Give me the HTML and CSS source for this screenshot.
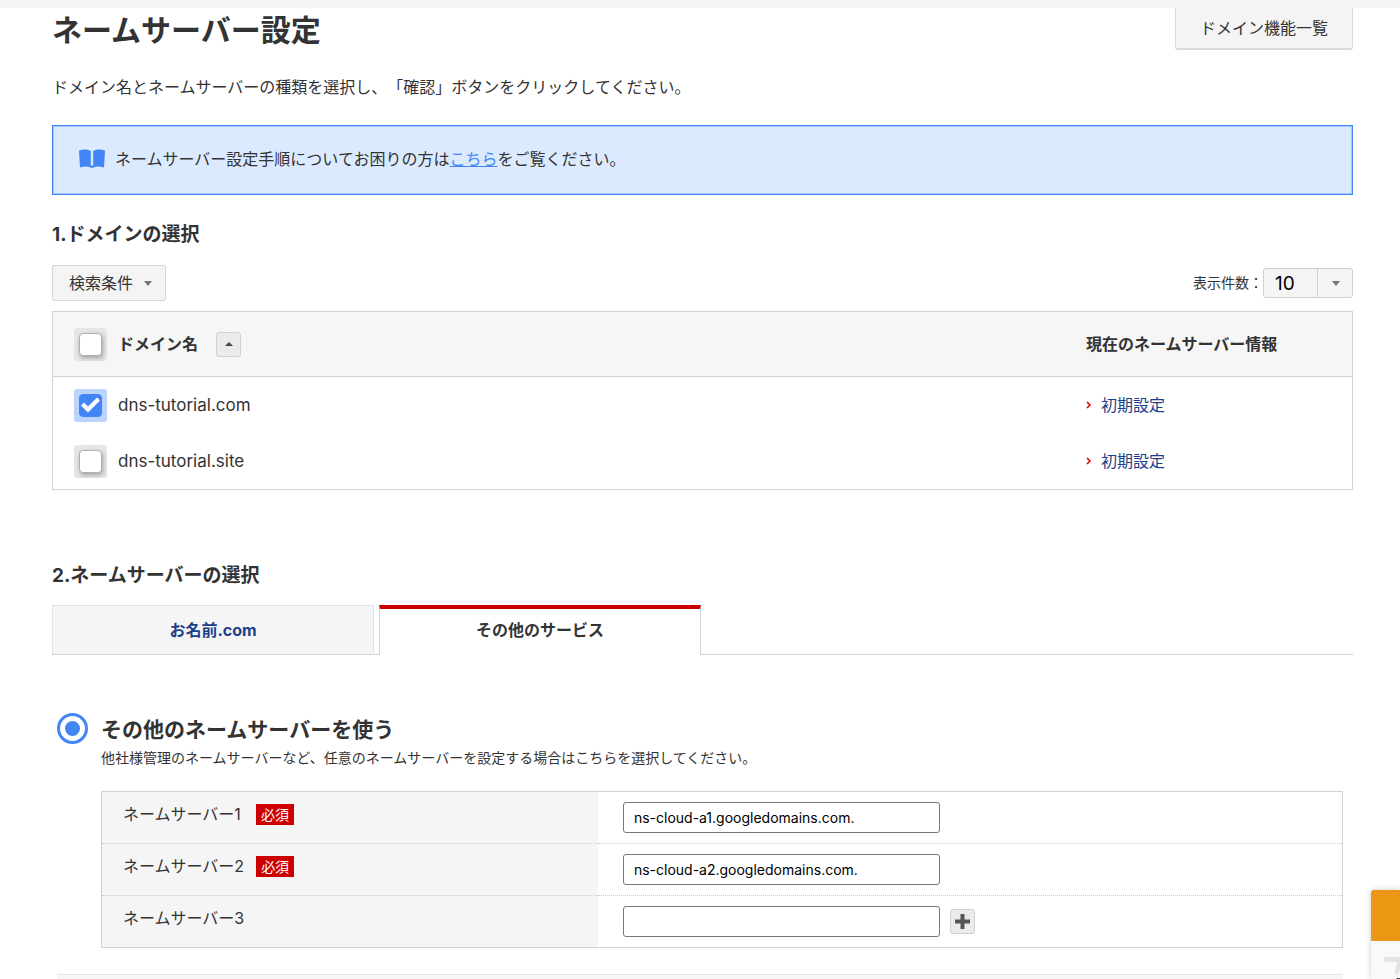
FILE: index.html
```
<!DOCTYPE html>
<html lang="ja">
<head>
  <meta charset="UTF-8">
  <meta name="viewport" content="width=device-width, initial-scale=1.0">
  <title>ネームサーバー設定</title>
  <link rel="stylesheet" href="styles.css">
</head>
<body>
  <div class="topbar"></div>

  <main class="page">
    <header class="page-header">
      <h1>ネームサーバー設定</h1>
      <button type="button" class="menu-btn">ドメイン機能一覧</button>
    </header>

    <p class="intro">ドメイン名とネームサーバーの種類を選択し、「確認」ボタンをクリックしてください。</p>

    <!-- Help notice -->
    <div class="notice">
      <svg class="book" width="26" height="20" viewBox="0 0 26 20" fill="#4285f4" aria-hidden="true">
        <path d="M0 1.500Q7-.5 11.800 2V16.500H14.200V2Q19-.5 26 1.500L25 18.500Q19 16.500 15 18.300Q13 19.800 11 18.300Q7 16.500 1 18.500Z"/>
      </svg>
      <p>ネームサーバー設定手順についてお困りの方は<a href="#">こちら</a>をご覧ください。</p>
    </div>

    <!-- Domain selection -->
    <h2>1.ドメインの選択</h2>
    <div class="toolbar">
      <button type="button" class="filter-btn">検索条件<span class="caret"></span></button>
      <div class="page-size">
        <label for="pageSize">表示件数：</label>
        <div class="select-box">
          <select id="pageSize">
            <option>10</option>
            <option>20</option>
            <option>50</option>
          </select>
          <span class="caret"></span>
        </div>
      </div>
    </div>

    <table class="domains">
      <thead>
        <tr>
          <th class="col-check"><span class="check"><input type="checkbox" aria-label="すべて選択"></span></th>
          <th class="col-name">
            <div class="sortable">ドメイン名<button type="button" class="square-btn" aria-label="並び替え"><span class="caret up"></span></button></div>
          </th>
          <th class="col-ns">現在のネームサーバー情報</th>
        </tr>
      </thead>
      <tbody>
        <tr>
          <td class="col-check"><span class="check"><input type="checkbox" id="domain1" checked></span></td>
          <td class="col-name"><label for="domain1">dns-tutorial.com</label></td>
          <td class="col-ns">
            <a href="#"><svg width="6" height="8" viewBox="0 0 6 8" aria-hidden="true"><path d="M1 1l3 3-3 3"/></svg>初期設定</a>
          </td>
        </tr>
        <tr>
          <td class="col-check"><span class="check"><input type="checkbox" id="domain2"></span></td>
          <td class="col-name"><label for="domain2">dns-tutorial.site</label></td>
          <td class="col-ns">
            <a href="#"><svg width="6" height="8" viewBox="0 0 6 8" aria-hidden="true"><path d="M1 1l3 3-3 3"/></svg>初期設定</a>
          </td>
        </tr>
      </tbody>
    </table>

    <!-- Name server selection -->
    <h2 class="second">2.ネームサーバーの選択</h2>
    <nav class="tabs">
      <a href="#" class="tab">お名前.com</a>
      <a href="#" class="tab active">その他のサービス</a>
    </nav>

    <section class="other">
      <input type="radio" id="otherNs" class="radio" checked>
      <div class="other-body">
        <label for="otherNs" class="other-title">その他のネームサーバーを使う</label>
        <p class="note">他社様管理のネームサーバーなど、任意のネームサーバーを設定する場合はこちらを選択してください。</p>

        <table class="servers">
          <tr>
            <th><label for="ns1">ネームサーバー1</label><span class="required">必須</span></th>
            <td><div class="field"><input type="text" id="ns1" value="ns-cloud-a1.googledomains.com."></div></td>
          </tr>
          <tr>
            <th><label for="ns2">ネームサーバー2</label><span class="required">必須</span></th>
            <td><div class="field"><input type="text" id="ns2" value="ns-cloud-a2.googledomains.com."></div></td>
          </tr>
          <tr>
            <th><label for="ns3">ネームサーバー3</label></th>
            <td>
              <div class="field">
                <input type="text" id="ns3">
                <button type="button" class="square-btn" aria-label="追加">
                  <svg width="15" height="15" viewBox="0 0 15 15" aria-hidden="true"><path d="M5.500 0h4v5.500H15v4H9.500V15h-4V9.500H0v-4h5.500z"/></svg>
                </button>
              </div>
            </td>
          </tr>
        </table>
      </div>
    </section>

    <div class="next-block"></div>
  </main>

  <!-- Support widget at the window edge -->
  <aside class="side-widget">
    <div class="side-head"></div>
    <div class="side-body">
      <svg width="17" height="22" viewBox="0 0 17 22" aria-hidden="true">
        <path d="M17 2.500H3M17 5L14 15" fill="none" stroke="#e4e4e4" stroke-width="5" stroke-linecap="round"/>
        <path d="M13 22L14 21H17V22Z" fill="#444"/>
      </svg>
    </div>
  </aside>
</body>
</html>
```
FILE: styles.css
```
* {
  margin: 0;
  padding: 0;
  box-sizing: border-box;
}

body {
  display: flex;
  flex-direction: column;
  min-height: 100vh;
  font-family: Inter, "Noto Sans CJK JP", sans-serif;
  font-size: 16px;
  line-height: 24px;
  text-spacing-trim: space-all;
  color: #333;
  background: #fff;
}

button, input, select {
  font-family: inherit;
  color: inherit;
}

button {
  cursor: pointer;
}

.topbar {
  height: 8px;
  background: #f4f4f4;
}

.page {
  display: flex;
  flex-direction: column;
  flex: 1;
  padding: 0 47px 0 52px;
}

/* Title row */
.page-header {
  display: flex;
  justify-content: space-between;
  align-items: flex-start;
}

h1 {
  font-size: 30px;
  line-height: 44px;
}

.menu-btn {
  padding: 8px 24px;
  font-size: 16px;
  line-height: 24px;
  background: #f4f4f4;
  border: 1px solid #d9d9d9;
  border-top: 0;
  border-bottom-width: 2px;
  border-radius: 0 0 3px 3px;
}

.intro {
  margin: 23px 0 26px;
}

/* Help notice */
.notice {
  display: flex;
  align-items: center;
  gap: 10px;
  padding: 21px 26px 23px;
  background: #dbeaff;
  border: 1px solid #4285f4;
  outline: 1px solid #a6c6fa;
  outline-offset: -2px;
}

.notice a {
  color: #4285f4;
}

h2 {
  margin-top: 26px;
  font-size: 19px;
  line-height: 28px;
}

h2.second {
  margin-top: 72px;
}

.caret {
  border: 4px solid transparent;
  border-top: 5px solid #777;
  border-bottom: 0;
}

.caret.up {
  border-top: 0;
  border-bottom: 4px solid #444;
}

/* Filter button and page size */
.toolbar {
  display: flex;
  justify-content: space-between;
  align-items: center;
  margin: 16px 0 10px;
}

.filter-btn {
  display: flex;
  align-items: center;
  gap: 11px;
  padding: 5px 13px 5px 16px;
  font-size: 16px;
  line-height: 24px;
  background: #f4f4f4;
  border: 1px solid #d5d5d5;
  border-radius: 2px;
}

.page-size {
  display: flex;
  align-items: center;
  font-size: 14px;
}

.select-box {
  display: flex;
  align-items: center;
  background: #f5f5f5;
  border: 1px solid #d0d0d0;
  border-radius: 3px;
  padding-right: 12px;
}

.select-box select {
  width: 54px;
  height: 28px;
  margin-right: 14px;
  padding-left: 11px;
  font-size: 19px;
  color: #000;
  background: none;
  border: 0;
  border-right: 1px solid #d0d0d0;
  appearance: none;
}

/* Domain table */
.domains {
  width: 100%;
  border: 1px solid #d3d3d3;
  border-collapse: separate;
  border-spacing: 0;
  text-align: left;
}

.domains thead th {
  height: 65px;
  background: #f6f6f6;
  border-bottom: 1px solid #d3d3d3;
}

.domains td {
  height: 56px;
}

.domains label {
  font-size: 17px;
}

.col-check {
  width: 65px;
  padding-left: 21px;
}

.col-ns {
  width: 266px;
}

.col-ns a {
  display: flex;
  align-items: center;
  gap: 9px;
  color: #1b3f8b;
  text-decoration: none;
}

.col-ns svg {
  fill: none;
  stroke: #d00;
  stroke-width: 1.5;
}

.sortable {
  display: flex;
  align-items: center;
  gap: 18px;
}

.square-btn {
  display: flex;
  align-items: center;
  justify-content: center;
  width: 25px;
  height: 25px;
  background: #ebebeb;
  border: 1px solid #d0d0d0;
  border-radius: 3px;
}

.square-btn svg {
  fill: #555;
}

.check {
  display: flex;
  width: 33px;
  height: 33px;
  padding: 5px;
  background: #e6e6e6;
  border-radius: 3px;
}

.check input {
  display: flex;
  justify-content: center;
  width: 23px;
  height: 23px;
  background: #fff;
  border: 1px solid #b0b0b0;
  border-radius: 4px;
  box-shadow: 1px 2px 4px rgba(0, 0, 0, 0.3);
  appearance: none;
}

.check:has(input:checked) {
  background: #bcd3fd;
}

.check input:checked {
  background: #4285f4;
  border-color: #4285f4;
  box-shadow: none;
}

.check input:checked::after {
  content: "";
  width: 21px;
  height: 21px;
  background: #fff;
  clip-path: polygon(1px 11px, 4px 8px, 8px 12px, 17px 3px, 20px 6px, 8px 18px);
}

/* Tabs */
.tabs {
  display: flex;
  gap: 5px;
  margin-top: 15px;
  border-bottom: 1px solid #d3d3d3;
}

.tab {
  flex: 0 0 322px;
  padding: 12px;
  font-weight: bold;
  line-height: 24px;
  text-align: center;
  color: #1b3f8b;
  text-decoration: none;
  background: #f5f5f5;
  border: 1px solid #e3e3e3;
  border-bottom: 0;
}

.tab.active {
  margin-bottom: -1px;
  padding-top: 9px;
  color: #333;
  background: #fff;
  border-color: #d3d3d3;
  border-top: 4px solid #c00;
}

/* Other name servers */
.other {
  display: flex;
  gap: 13px;
  margin-top: 58px;
  padding: 0 10px 0 5px;
}

.radio {
  display: flex;
  flex: none;
  width: 31px;
  height: 31px;
  padding: 5px;
  border: 3px solid #4285f4;
  border-radius: 50%;
  appearance: none;
}

.radio:checked::after {
  content: "";
  flex: 1;
  background: #4285f4;
  border-radius: 50%;
}

.other-body {
  flex: 1;
}

.other-title {
  display: block;
  font-size: 21px;
  font-weight: bold;
  line-height: 34px;
}

.note {
  margin-bottom: 22px;
  font-size: 14px;
  line-height: 22px;
}

.servers {
  width: 100%;
  border: 1px solid #d3d3d3;
  border-collapse: collapse;
}

.servers th {
  width: 40%;
  padding: 10px 21px;
  font-weight: normal;
  text-align: left;
  vertical-align: top;
  background: #f5f5f5;
}

.servers label {
  display: inline-block;
  min-width: 121px;
}

.servers td {
  padding: 10px 25px;
}

.servers tr + tr {
  border-top: 1px dotted #ccc;
}

.required {
  display: inline-block;
  margin-left: 12px;
  padding: 0 5px;
  font-size: 14px;
  line-height: 21px;
  color: #fff;
  background: #c00;
}

.field {
  display: flex;
  align-items: center;
  gap: 10px;
}

.field input {
  width: 317px;
  height: 31px;
  padding: 0 10px;
  font-size: 14px;
  color: #000;
  background: #fff;
  border: 1px solid #777;
  border-radius: 3px;
}

.next-block {
  flex: 1;
  min-height: 4px;
  margin: 26px 10px 0 5px;
  background: #f7f7f7;
  border-top: 1px solid #e5e5e5;
}

/* Support widget */
.side-widget {
  position: fixed;
  right: 0;
  bottom: 0;
  width: 29px;
  border-radius: 3px 0 0 0;
  overflow: hidden;
  box-shadow: 0 0 6px rgba(0, 0, 0, 0.2);
}

.side-head {
  height: 51px;
  background: #ec9714;
}

.side-body {
  display: flex;
  justify-content: flex-end;
  padding-top: 16px;
  background: #f9f9f9;
}
```
